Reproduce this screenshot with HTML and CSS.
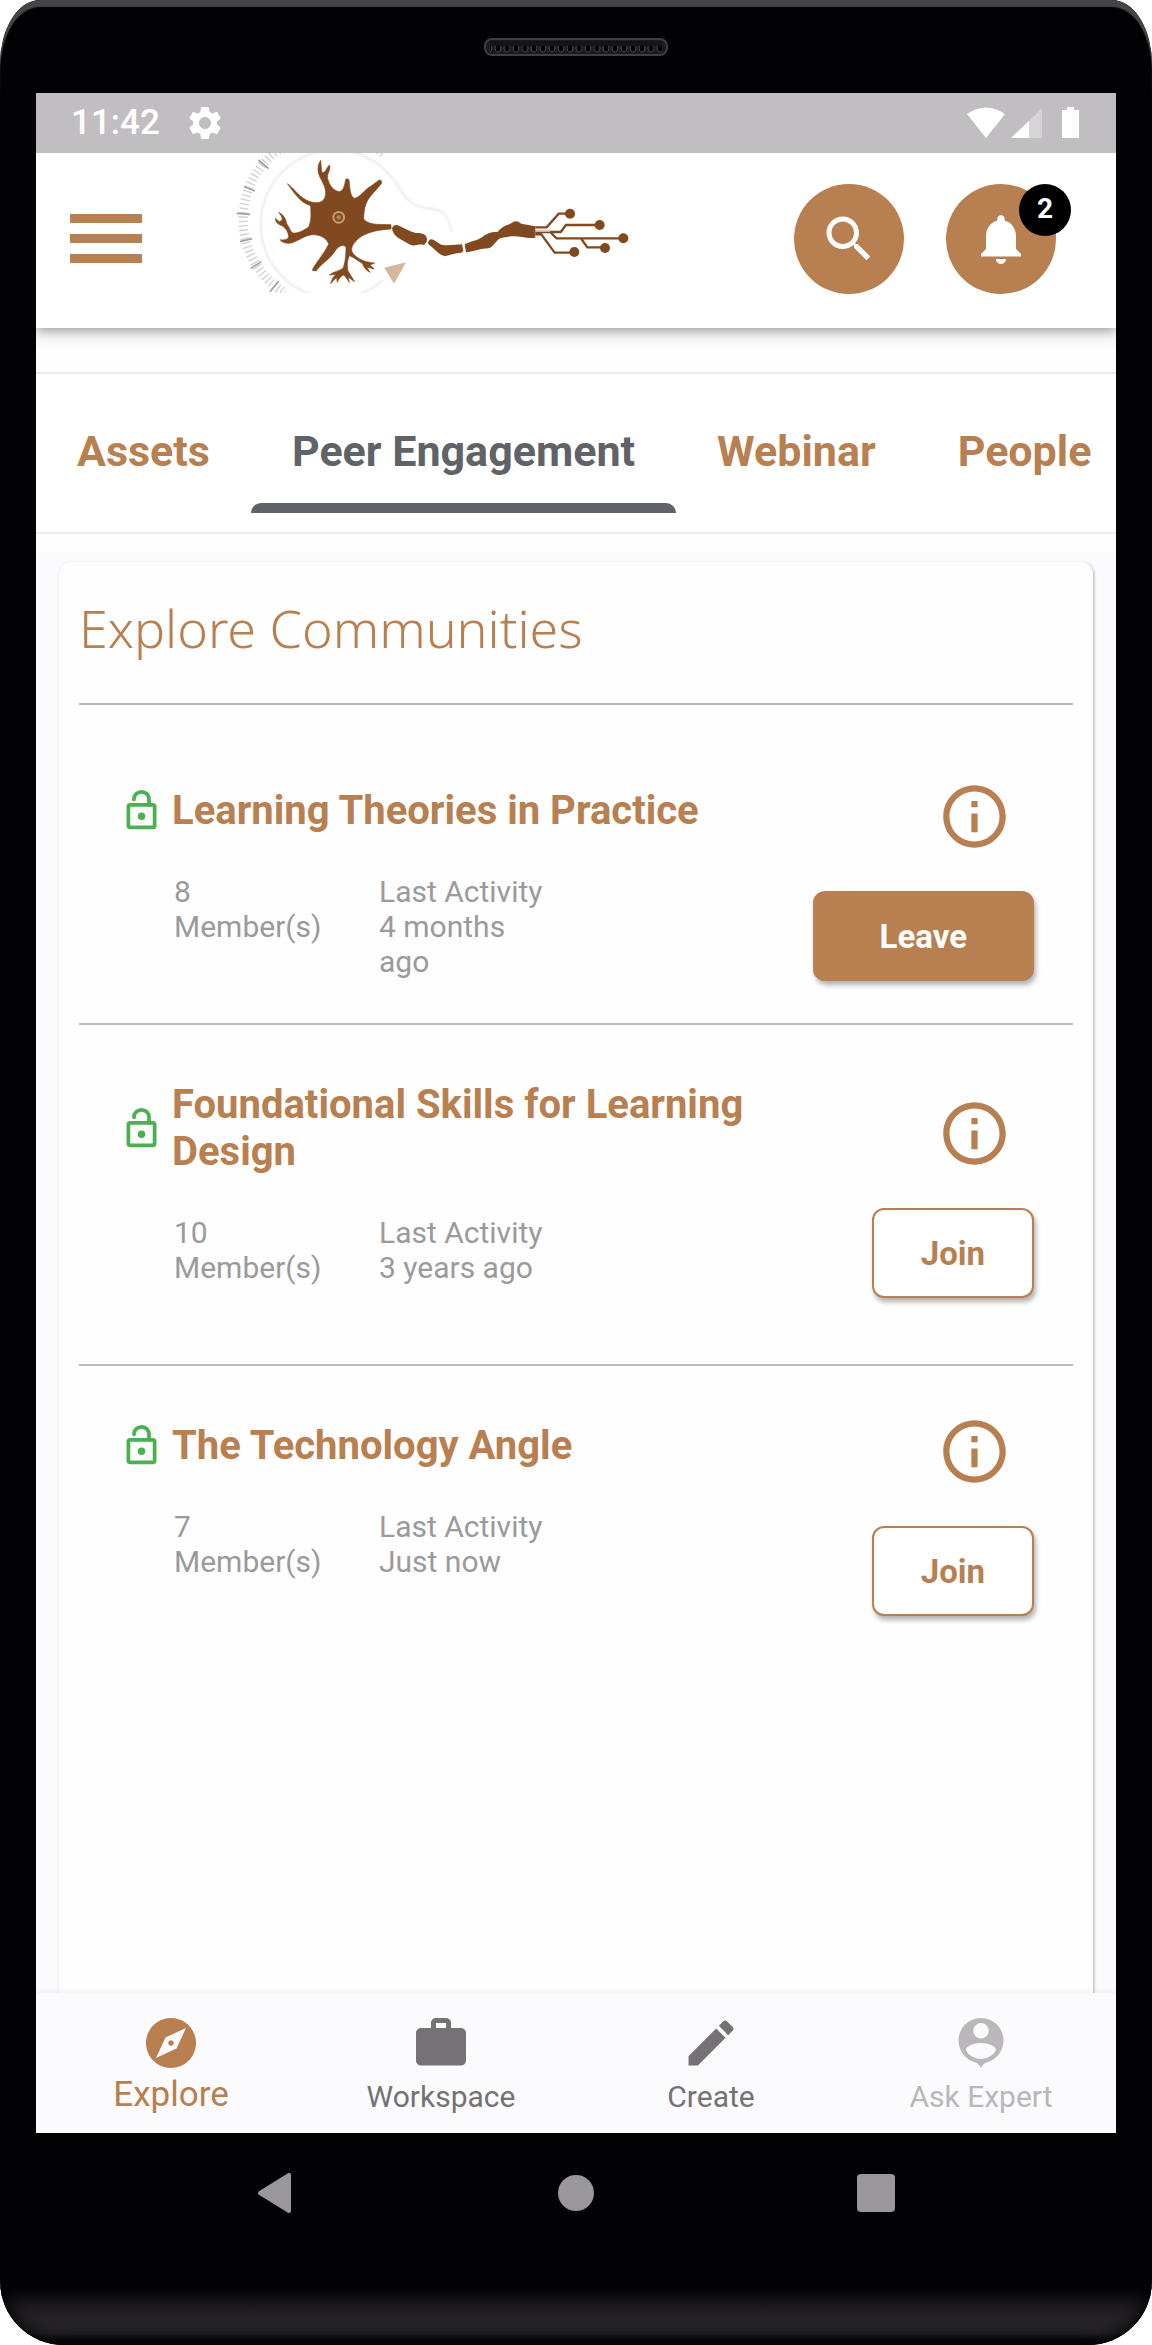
FILE: index.html
```html
<!DOCTYPE html>
<html lang="en">
<head>
<meta charset="utf-8">
<meta name="viewport" content="width=device-width, initial-scale=1">
<title>Explore Communities</title>
<link rel="stylesheet" href="styles.css">
</head>
<body>
<div class="phone">
  <div class="bezel-top">
    <svg class="speaker" viewBox="0 0 184 18" aria-hidden="true">
      <defs>
        <pattern id="slots" width="9" height="18" patternUnits="userSpaceOnUse">
          <ellipse cx="5" cy="10" rx="3" ry="4" fill="#000" stroke="#464447"/>
          <rect width="9" height="8" fill="#151416"/>
        </pattern>
      </defs>
      <rect x="1" y="1" width="182" height="16" rx="7" fill="#1c1b1d" stroke="#3f3d40" stroke-width="2"/>
      <rect x="6" y="3" width="172" height="13" fill="url(#slots)"/>
    </svg>
  </div>

  <div class="screen">
    <div class="status">
      <span class="clock">11:42</span>
      <svg class="gear" viewBox="0 0 24 24" aria-hidden="true"><path fill="#fff" d="M19.14 12.94c.04-.3.06-.61.06-.94 0-.32-.02-.64-.07-.94l2.03-1.58c.18-.14.23-.41.12-.61l-1.92-3.32c-.12-.22-.37-.29-.59-.22l-2.39.96c-.5-.38-1.03-.7-1.62-.94l-.36-2.54c-.04-.24-.24-.41-.48-.41h-3.84c-.24 0-.43.17-.47.41l-.36 2.54c-.59.24-1.13.57-1.62.94l-2.39-.96c-.22-.08-.47 0-.59.22L2.74 8.87c-.12.21-.08.47.12.61l2.03 1.58c-.05.3-.09.63-.09.94s.02.64.07.94l-2.03 1.58c-.18.14-.23.41-.12.61l1.92 3.32c.12.22.37.29.59.22l2.39-.96c.5.38 1.03.7 1.62.94l.36 2.54c.05.24.24.41.48.41h3.84c.24 0 .44-.17.47-.41l.36-2.54c.59-.24 1.13-.56 1.62-.94l2.39.96c.22.08.47 0 .59-.22l1.92-3.32c.12-.22.07-.47-.12-.61l-2.01-1.58zM12 15.6c-1.98 0-3.6-1.62-3.6-3.6s1.62-3.6 3.6-3.6 3.6 1.62 3.6 3.6-1.62 3.6-3.6 3.6z"/></svg>
      <svg class="signals" viewBox="0 0 112 32" aria-hidden="true">
        <path d="M0 7Q19-6 38 7L19 31Z" fill="#fff"/>
        <path d="M75 1V31H45Z" fill="#d6d4d7"/>
        <path d="M62 14V31H45V30Z" fill="#fff"/>
        <path d="M100 0h7v3h5v28H95V3h5Z" fill="#fff"/>
      </svg>
    </div>

    <header class="app-bar">
      <button class="menu" type="button" aria-label="Menu"><span></span><span></span><span></span></button>
      <svg class="logo" viewBox="0 24 1260 420" role="img" aria-label="Neuron logo">
        <g fill="none">
          <path d="M490 25A257 257 0 1 0 195 444" stroke="#d2cfd2" stroke-width="28" stroke-dasharray="4 9"/>
          <path d="M50 205 90 208M72 125 105 138M115 45 146 71M60 290 96 281M92 370 124 350M150 440 176 409" stroke="#a19fa4" stroke-width="5"/>
          <path d="M490 405A222 222 0 1 1 480 62C540 110 545 165 590 182S680 175 695 262" stroke="#f6f2f2" stroke-width="10"/>
        </g>
        <path fill="#d3b89c" d="M493 368 558 352 522 416Z"/>
        <g fill="#81491f">
          <path d="M272 182C240 172 228 150 202 116C225 132 240 160 270 170C300 178 318 170 317 140C316 118 294 95 294 75C294 60 298 52 302 46L305 80L310 83C318 80 320 68 328 60C334 72 322 84 322 96C326 122 342 138 358 140C372 138 374 118 377 103Q382 98 387 105C390 130 390 152 402 160C420 160 432 134 452 124L478 105Q488 106 484 116L460 144C436 168 432 190 431 222C445 240 470 238 513 239V252C470 255 440 262 416 280C400 296 392 306 396 320C404 336 422 344 438 350C446 350 454 354 464 354L450 360C454 366 460 366 462 372L440 366L450 382C438 376 430 366 428 356C412 346 400 336 388 332C382 346 380 362 384 378L404 410L384 396L388 412L372 390C364 392 358 398 352 412L350 398C342 402 338 410 332 416C336 400 342 394 348 388L328 390C342 378 358 380 370 368C376 350 378 330 378 306C368 296 354 304 344 320C326 346 306 354 288 378L277 376C282 360 310 330 326 298C322 284 310 274 290 270C262 264 240 286 214 294C200 296 188 294 180 284C192 286 204 284 206 276C206 262 198 250 186 242C172 238 166 230 166 220L178 230L186 226C188 216 182 210 176 202C190 208 198 222 200 236C208 246 210 258 218 264C236 266 250 256 266 246C276 222 272 200 272 182Z" stroke="#81491f" stroke-width="2"/>
          <path d="M516 250Q520 238 532 240L570 258C582 266 598 262 612 268Q624 276 620 290L612 300C596 296 586 304 572 300L536 280Q518 268 516 250Z"/>
          <path d="M624 296Q626 278 640 284L664 299C686 304 706 298 726 298L730 318L724 323C704 324 690 330 674 334C656 328 644 312 624 296Z"/>
          <path d="M734 298C750 288 768 288 784 278C800 264 820 258 838 262L842 278C828 286 822 304 806 310C784 310 760 320 738 322Z"/>
          <path d="M832 262C850 240 866 242 880 230Q892 226 904 236C920 240 934 240 946 244V278C920 282 900 272 872 274L838 280Z"/>
          <circle cx="1050" cy="206" r="15"/><circle cx="1139" cy="240" r="15"/><circle cx="1210" cy="280" r="15"/><circle cx="1155" cy="309" r="15"/><circle cx="1063" cy="321" r="15"/>
        </g>
        <path d="M946 247H980L1016 206H1045M946 261H1022L1038 240H1135M990 261 1010 280H1206M1084 282 1102 307H1150M946 268H964L1004 323H1058" fill="none" stroke="#81491f" stroke-width="7"/>
        <path d="M946 259H990" stroke="#cdb49c" stroke-width="4"/>
        <circle cx="356" cy="217" r="19" fill="#c99a73"/><circle cx="356" cy="217" r="13" fill="#81491f"/><circle cx="356" cy="217" r="7" fill="#b08163"/>
      </svg>
      <div class="app-actions">
        <button class="round" type="button" aria-label="Search">
          <svg class="icon" viewBox="0 0 24 24"><path fill="#fff" d="M15.5 14h-.79l-.28-.27C15.41 12.59 16 11.11 16 9.5 16 5.91 13.09 3 9.5 3S3 5.91 3 9.5 5.91 16 9.5 16c1.61 0 3.09-.59 4.23-1.57l.27.28v.79l5 4.99L20.49 19l-4.99-5zm-6 0C7.01 14 5 11.99 5 9.5S7.01 5 9.5 5 14 7.01 14 9.5 11.99 14 9.5 14z"/></svg>
        </button>
        <button class="round" type="button" aria-label="Notifications">
          <svg class="icon" viewBox="0 0 24 24"><path fill="#fff" d="M12 22c1.1 0 2-.9 2-2h-4c0 1.1.89 2 2 2zm6-6v-5c0-3.07-1.64-5.64-4.5-6.32V4c0-.83-.67-1.5-1.5-1.5s-1.5.67-1.5 1.5v.68C7.63 5.36 6 7.92 6 11v5l-2 2v1h16v-1l-2-2z"/></svg>
          <span class="badge">2</span>
        </button>
      </div>
    </header>

    <nav class="tabs" aria-label="Sections">
      <a class="tab" href="#assets">Assets</a>
      <a class="tab current" href="#peer" aria-current="page">Peer Engagement</a>
      <a class="tab" href="#webinar">Webinar</a>
      <a class="tab" href="#people">People</a>
    </nav>

    <main class="content">
      <section class="card">
        <h1>Explore Communities</h1>

        <article class="community first">
          <div class="details">
            <div class="title">
              <svg class="lock" viewBox="0 0 24 24" aria-hidden="true"><use href="#lock-open"/></svg>
              <h2>Learning Theories in Practice</h2>
            </div>
            <div class="meta"><p>8 Member(s)</p><p>Last Activity<br>4 months ago</p></div>
          </div>
          <div class="actions">
            <button class="info" type="button" aria-label="About this community"><svg viewBox="0 0 24 24"><use href="#info"/></svg></button>
            <button class="action leave" type="button">Leave</button>
          </div>
        </article>

        <article class="community two-line">
          <div class="details">
            <div class="title">
              <svg class="lock" viewBox="0 0 24 24" aria-hidden="true"><use href="#lock-open"/></svg>
              <h2>Foundational Skills for Learning Design</h2>
            </div>
            <div class="meta"><p>10 Member(s)</p><p>Last Activity<br>3 years ago</p></div>
          </div>
          <div class="actions">
            <button class="info" type="button" aria-label="About this community"><svg viewBox="0 0 24 24"><use href="#info"/></svg></button>
            <button class="action" type="button">Join</button>
          </div>
        </article>

        <article class="community">
          <div class="details">
            <div class="title">
              <svg class="lock" viewBox="0 0 24 24" aria-hidden="true"><use href="#lock-open"/></svg>
              <h2>The Technology Angle</h2>
            </div>
            <div class="meta"><p>7 Member(s)</p><p>Last Activity<br>Just now</p></div>
          </div>
          <div class="actions">
            <button class="info" type="button" aria-label="About this community"><svg viewBox="0 0 24 24"><use href="#info"/></svg></button>
            <button class="action" type="button">Join</button>
          </div>
        </article>
      </section>
    </main>

    <nav class="bottom-nav" aria-label="Main">
      <a class="active" href="#explore">
        <svg class="icon" viewBox="0 0 24 24"><path d="M12 10.9c-.61 0-1.1.49-1.1 1.1s.49 1.1 1.1 1.1c.61 0 1.1-.49 1.1-1.1s-.49-1.1-1.1-1.1zM12 2C6.48 2 2 6.48 2 12s4.48 10 10 10 10-4.48 10-10S17.52 2 12 2zm2.19 12.19L6 18l3.81-8.19L18 6l-3.81 8.19z"/></svg>
        Explore</a>
      <a href="#workspace">
        <svg class="icon" viewBox="0 0 24 24"><path d="M20 6h-4V4c0-1.11-.89-2-2-2h-4c-1.11 0-2 .89-2 2v2H4c-1.11 0-1.99.89-1.99 2L2 19c0 1.11.89 2 2 2h16c1.11 0 2-.89 2-2V8c0-1.11-.89-2-2-2zm-6 0h-4V4h4v2z"/></svg>
        Workspace</a>
      <a href="#create">
        <svg class="icon" viewBox="0 0 24 24"><path d="M3 17.25V21h3.75L17.81 9.94l-3.75-3.75L3 17.25zM20.71 7.04c.39-.39.39-1.02 0-1.41l-2.34-2.34c-.39-.39-1.02-.39-1.41 0l-1.83 1.83 3.75 3.75 1.83-1.83z"/></svg>
        Create</a>
      <a class="muted" href="#expert">
        <svg class="icon" viewBox="0 0 24 24"><path fill-rule="evenodd" d="M12 2A9 9 0 0 0 3 11C3 15.200 5.900 18.700 9.500 19.700C10.700 20.100 11.300 20.600 12 22C12.700 20.600 13.300 20.100 14.500 19.700C18.100 18.700 21 15.200 21 11A9 9 0 0 0 12 2ZM12 4A3.100 3.100 0 0 1 12 10.200A3.100 3.100 0 0 1 12 4ZM12 12C15 12 18 13.300 18 14.800C17 17 14.500 18.400 12 18.400S7 17 6 14.800C6 13.300 9 12 12 12Z"/></svg>
        Ask Expert</a>
    </nav>
  </div>

  <div class="system-nav">
    <button type="button" aria-label="Back"><svg viewBox="0 0 40 40"><path d="M33 2V38L4 20Z" fill="#9a979a" stroke="#9a979a" stroke-width="4" stroke-linejoin="round"/></svg></button>
    <button type="button" aria-label="Home"><svg viewBox="0 0 40 40"><circle cx="20" cy="20" r="18" fill="#9a979a"/></svg></button>
    <button type="button" aria-label="Recent apps"><svg viewBox="0 0 40 40"><rect x="1" y="1" width="38" height="38" rx="4" fill="#9a979a"/></svg></button>
  </div>
  <div class="bezel-bottom"></div>
</div>

<svg class="symbols" aria-hidden="true">
  <symbol id="lock-open" viewBox="0 0 24 24"><rect x="5" y="9" width="14" height="12" rx="1" fill="none" stroke="#4caf50" stroke-width="2"/><path d="M8 6A4 4 0 0 1 16 6V9" fill="none" stroke="#4caf50" stroke-width="2" stroke-linecap="round"/><circle cx="12" cy="15" r="2" fill="#4caf50"/></symbol>
  <symbol id="info" viewBox="0 0 24 24"><path fill="#b87f50" d="M11 7h2v2h-2zm0 4h2v6h-2zm1-9C6.480 2 2 6.480 2 12s4.480 10 10 10 10-4.480 10-10S17.520 2 12 2zm0 18c-4.410 0-8-3.590-8-8s3.590-8 8-8 8 3.590 8 8-3.590 8-8 8z"/></symbol>
</svg>
</body>
</html>
```
FILE: styles.css
```css
:root {
  --brand: #b87f50;
  --grey: #9c999c;
  --surface: #fbfafd;
}

* { box-sizing: border-box; }

body {
  margin: 0;
  background: #fff;
  font-family: Roboto, "Liberation Sans", sans-serif;
}

h1, h2, p { margin: 0; }
button { padding: 0; border: 0; background: none; font: inherit; cursor: pointer; }
a { color: inherit; text-decoration: none; }
svg { display: block; flex: none; }
.symbols { display: none; }
.icon { width: 60px; height: 60px; }

.phone {
  display: flex;
  flex-direction: column;
  min-height: 100vh;
  overflow: hidden;
  border-radius: 40px 40px 64px 64px / 64px;
  background: #020103;
}

.bezel-top {
  display: flex;
  justify-content: center;
  height: 93px;
  padding-top: 38px;
  border-radius: 40px 40px 0 0 / 64px 64px 0 0;
  box-shadow: inset 0 7px 1px #464447;
}
.speaker { width: 184px; height: 18px; }

.screen {
  flex: 1;
  display: flex;
  flex-direction: column;
  margin: 0 36px;
  overflow: hidden;
  background: var(--surface);
}

.status {
  position: relative;
  z-index: 1;
  display: flex;
  align-items: center;
  height: 60px;
  padding: 0 37px 0 35px;
  background: #c1bec1;
  color: #fff;
}
.clock { font-size: 35px; font-weight: 500; line-height: 60px; }
.gear { width: 40px; height: 40px; margin-left: 25px; }
.signals { width: 112px; height: 32px; margin-left: auto; }

.app-bar {
  display: flex;
  align-items: center;
  height: 175px;
  padding: 0 60px 4px 34px;
  background: #fff;
  box-shadow: 0 3px 12px rgba(0, 0, 0, .4);
}
.menu { display: flex; flex-direction: column; gap: 11px; width: 72px; }
.menu span { height: 9px; background: var(--brand); }
.logo { align-self: flex-start; width: 420px; height: 140px; margin-left: 78px; }
.app-actions { display: flex; gap: 42px; margin-left: auto; }
.round {
  position: relative;
  display: flex;
  align-items: center;
  justify-content: center;
  width: 110px;
  height: 110px;
  border-radius: 50%;
  background: var(--brand);
}
.badge {
  position: absolute;
  top: 0;
  right: -15px;
  width: 52px;
  height: 52px;
  border-radius: 50%;
  background: #000;
  color: #fff;
  font-size: 28px;
  font-weight: 700;
  line-height: 50px;
}

.tabs {
  display: flex;
  height: 162px;
  margin-top: 44px;
  border: solid #ebeaec;
  border-width: 2px 0;
  background: #fff;
  box-shadow: 0 -22px #fefefe, 0 18px #fefefe;
}
.tab {
  position: relative;
  flex: none;
  padding: 0 41px;
  color: var(--brand);
  font-size: 43px;
  font-weight: 700;
  line-height: 154px;
}
.tab.current { color: #5f6368; }
.tab.current::after {
  content: "";
  position: absolute;
  right: 0;
  bottom: 19px;
  left: 0;
  height: 10px;
  border-radius: 10px 10px 0 0;
  background: #5f6368;
}

.content { flex: 1; display: flex; padding: 28px 23px 0; }
.card {
  flex: 1;
  padding: 0 20px;
  border-radius: 12px 12px 0 0;
  background: #fefefe;
  box-shadow: 1px 1px 3px rgba(0, 0, 0, .3);
}
h1 {
  padding: 28px 0 37px;
  border-bottom: 2px solid #b6b4b7;
  color: var(--brand);
  font-family: "Noto Sans", sans-serif;
  font-size: 52px;
  font-weight: 300;
  line-height: 76px;
}

.community {
  display: flex;
  justify-content: space-between;
  padding: 48px 39px 66px 46px;
}
.community.first { padding: 74px 39px 42px 46px; }
.community + .community { border-top: 2px solid #bcbabd; }
.details { flex: 1; padding-top: 8px; }
.title { display: flex; align-items: center; gap: 8px; }
.lock { width: 45px; height: 45px; margin-left: -6px; }
h2 {
  max-width: 600px;
  color: var(--brand);
  font-size: 40px;
  font-weight: 700;
  line-height: 47px;
}
.meta {
  display: grid;
  grid-template-columns: 150px 180px;
  gap: 55px;
  margin-top: 40px;
  padding-left: 49px;
  color: var(--grey);
  font-size: 30px;
  line-height: 35px;
}

.actions { display: flex; flex-direction: column; align-items: flex-end; gap: 37px; }
.two-line .actions { padding-top: 23px; }
.info { margin-right: 22px; }
.info svg { width: 75px; height: 75px; }
.action {
  height: 90px;
  padding: 0 47px;
  border: 2px solid var(--brand);
  border-radius: 12px;
  background: #fff;
  box-shadow: 2px 4px 5px rgba(0, 0, 0, .3);
  color: var(--brand);
  font-size: 33px;
  font-weight: 700;
}
.action.leave { padding: 0 65px; background: var(--brand); color: #fff; }

.bottom-nav {
  display: grid;
  grid-template-columns: repeat(4, 1fr);
  height: 140px;
  background: var(--surface);
  box-shadow: 0 -3px 4px rgba(60, 50, 80, .04);
}
.bottom-nav a {
  display: flex;
  flex-direction: column;
  align-items: center;
  gap: 4px;
  padding-top: 20px;
  color: #757275;
  font-size: 30px;
  line-height: 40px;
}
.bottom-nav path { fill: currentColor; }
.bottom-nav .active { color: var(--brand); font-size: 35px; line-height: 36px; }
.bottom-nav .muted { color: #b9b7ba; }

.system-nav {
  display: grid;
  grid-template-columns: repeat(3, 1fr);
  align-items: center;
  justify-items: center;
  height: 120px;
  padding: 0 11%;
}
.system-nav svg { width: 40px; height: 40px; }

.bezel-bottom {
  height: 58px;
  margin-top: 34px;
  border-radius: 0 0 64px 64px / 0 0 58px 58px;
  background: linear-gradient(#0e0d0f, #242225 55%, #272528 80%, #09080a);
  box-shadow: inset 0 0 16px 6px #020103;
}
```
